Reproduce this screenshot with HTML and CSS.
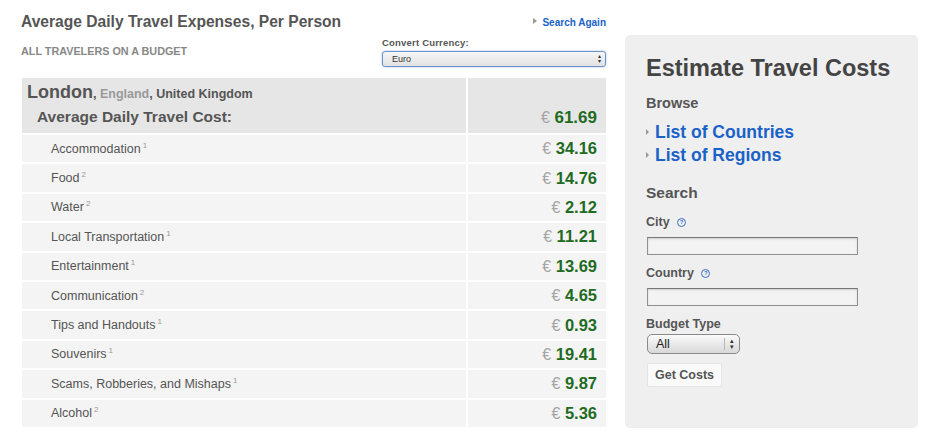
FILE: index.html
```html
<!DOCTYPE html>
<html lang="en">
<head>
    <meta charset="UTF-8">
    <title>Average Daily Travel Expenses - London</title>
    <link rel="stylesheet" href="styles.css">
</head>
<body>
    <div id="page">
        <div id="costs">
            <div class="head-row">
                <h1>Average Daily Travel Expenses, Per Person</h1>
                <a href="#" class="arrow-link small-link">Search Again</a>
            </div>
            <div class="sub-row">
                <p class="budget-label">ALL TRAVELERS ON A BUDGET</p>
                <div class="currency">
                    <label for="currency">Convert Currency:</label>
                    <div class="currency-select">
                        <span>Euro</span>
                        <span class="updown">&#9652;<br>&#9662;</span>
                    </div>
                </div>
            </div>
            <table class="cost-table">
                <tr class="total-row">
                    <td class="name-cell">
                        <div class="place"><b class="city">London</b>, <span class="region">England</span>, United Kingdom</div>
                        <div class="total-label">Average Daily Travel Cost:</div>
                    </td>
                    <td class="value-cell"><span class="euro">&euro;</span> <span class="amount big">61.69</span></td>
                </tr>
                <tr><td class="name-cell">Accommodation<sup>1</sup></td><td class="value-cell"><span class="euro">&euro;</span> <span class="amount">34.16</span></td></tr>
                <tr><td class="name-cell">Food<sup>2</sup></td><td class="value-cell"><span class="euro">&euro;</span> <span class="amount">14.76</span></td></tr>
                <tr><td class="name-cell">Water<sup>2</sup></td><td class="value-cell"><span class="euro">&euro;</span> <span class="amount">2.12</span></td></tr>
                <tr><td class="name-cell">Local Transportation<sup>1</sup></td><td class="value-cell"><span class="euro">&euro;</span> <span class="amount">11.21</span></td></tr>
                <tr><td class="name-cell">Entertainment<sup>1</sup></td><td class="value-cell"><span class="euro">&euro;</span> <span class="amount">13.69</span></td></tr>
                <tr><td class="name-cell">Communication<sup>2</sup></td><td class="value-cell"><span class="euro">&euro;</span> <span class="amount">4.65</span></td></tr>
                <tr><td class="name-cell">Tips and Handouts<sup>1</sup></td><td class="value-cell"><span class="euro">&euro;</span> <span class="amount">0.93</span></td></tr>
                <tr><td class="name-cell">Souvenirs<sup>1</sup></td><td class="value-cell"><span class="euro">&euro;</span> <span class="amount">19.41</span></td></tr>
                <tr><td class="name-cell">Scams, Robberies, and Mishaps<sup>1</sup></td><td class="value-cell"><span class="euro">&euro;</span> <span class="amount">9.87</span></td></tr>
                <tr><td class="name-cell">Alcohol<sup>2</sup></td><td class="value-cell"><span class="euro">&euro;</span> <span class="amount">5.36</span></td></tr>
            </table>
            <div class="foot-row">
                <a href="#" class="arrow-link small-link">Where do these numbers come from?</a>
            </div>
        </div>

        <div id="sidebar">
            <h2>Estimate Travel Costs</h2>
            <h3>Browse</h3>
            <ul class="browse-list">
                <li><a href="#" class="arrow-link">List of Countries</a></li>
                <li><a href="#" class="arrow-link">List of Regions</a></li>
            </ul>
            <h3 class="search-title">Search</h3>
            <form class="search-form">
                <label>City <span class="help">?</span></label>
                <input type="text" class="text-field">
                <label>Country <span class="help">?</span></label>
                <input type="text" class="text-field">
                <label>Budget Type</label>
                <div class="budget-select">
                    <span>All</span>
                    <span class="updown">&#9652;<br>&#9662;</span>
                </div>
                <button type="button" class="get-costs">Get Costs</button>
            </form>
        </div>
    </div>
</body>
</html>
```

FILE: styles.css
```css
body {
    margin: 0;
    padding: 0;
    background-color: #ffffff;
    font-family: "Liberation Sans", Arial, sans-serif;
    color: #555555;
}
#page {
    display: flex;
    align-items: flex-start;
    padding-left: 21px;
}
#costs {
    width: 585px;
    padding-top: 12px;
}
.head-row {
    display: flex;
    justify-content: space-between;
    align-items: center;
    height: 20px;
}
h1 {
    margin: 0;
    font-size: 15.6px;
    color: #555555;
    line-height: 20px;
}
a {
    text-decoration: none;
    color: #1a62c8;
    font-weight: bold;
}
.arrow-link::before {
    content: "";
    display: inline-block;
    border-left: 4px solid #999999;
    border-top: 3px solid transparent;
    border-bottom: 3px solid transparent;
    margin-right: 5px;
    vertical-align: middle;
    position: relative;
    top: -2px;
}
.small-link {
    font-size: 10px;
}
.sub-row {
    display: flex;
    justify-content: space-between;
    align-items: flex-start;
    height: 35px;
}
.budget-label {
    margin: 13px 0 0 0;
    font-size: 10.8px;
    font-weight: bold;
    color: #888888;
    line-height: 12px;
}
.currency {
    width: 224px;
    padding-top: 5px;
}
.currency label {
    display: block;
    font-size: 9.5px;
    font-weight: bold;
    color: #555555;
    line-height: 12px;
    letter-spacing: 0.2px;
}
.currency-select {
    margin-top: 2px;
    height: 14px;
    border: 1px solid #6b93c6;
    border-radius: 3px;
    box-shadow: 0 0 2px #8fb4e6;
    background: linear-gradient(#f6f6f6, #e2e2e2);
    display: flex;
    justify-content: space-between;
    align-items: center;
    padding: 0 4px 0 9px;
    font-size: 9px;
    color: #333333;
}
.updown {
    font-size: 6px;
    line-height: 5px;
    color: #333333;
    text-align: center;
}
.cost-table {
    width: 584px;
    margin-top: 11px;
    margin-left: 1px;
    border-collapse: collapse;
}
.cost-table td {
    background-color: #f4f4f4;
    border-top: 2px solid #ffffff;
    height: 27.4px;
    padding: 0;
}
.cost-table tr:first-child td {
    border-top: none;
}
.cost-table .name-cell {
    padding-left: 29px;
    font-size: 12.5px;
    color: #555555;
    border-right: 2px solid #ffffff;
}
sup {
    font-size: 8px;
    color: #999999;
    margin-left: 2px;
    vertical-align: 5px;
    line-height: 0;
}
.value-cell {
    width: 129px;
    padding-right: 9px !important;
    text-align: right;
    white-space: nowrap;
}
.euro {
    font-size: 16px;
    color: #a5a5a5;
}
.amount {
    font-size: 16.5px;
    font-weight: bold;
    color: #1f6b1f;
}
.total-row td {
    background-color: #e6e6e6;
    height: 50px;
    vertical-align: top;
}
.total-row .name-cell {
    padding-left: 5px;
}
.total-row .value-cell {
    vertical-align: bottom;
    padding-bottom: 5px;
}
.place {
    margin-top: 5px;
    font-size: 12.5px;
    font-weight: bold;
    color: #555555;
    line-height: 18px;
}
.city {
    font-size: 18px;
    color: #555555;
}
.region {
    color: #999999;
}
.total-label {
    margin-top: 5px;
    padding-left: 10px;
    font-size: 15.5px;
    font-weight: bold;
    color: #555555;
    line-height: 18px;
}
.amount.big {
    font-size: 17px;
}
.foot-row {
    text-align: right;
    margin-top: 3px;
}
#sidebar {
    width: 272px;
    min-height: 376px;
    margin-top: 35px;
    margin-left: 19px;
    padding: 17px 0 0 21px;
    background-color: #efefef;
    border-radius: 5px;
}
h2 {
    margin: 0;
    font-size: 23.5px;
    color: #444444;
    line-height: 32px;
}
h3 {
    margin: 10px 0 0 0;
    font-size: 14.5px;
    color: #555555;
    line-height: 18px;
}
.browse-list {
    list-style: none;
    margin: 9px 0 0 0;
    padding: 0;
}
.browse-list li {
    line-height: 23px;
}
.browse-list a {
    font-size: 17.5px;
    color: #1a62c8;
}
.browse-list .arrow-link::before {
    border-left-width: 3px;
    border-top-width: 3px;
    border-bottom-width: 3px;
    margin-right: 6px;
    top: -1px;
}
.search-title {
    margin-top: 17px;
    font-size: 15.5px;
}
.search-form {
    display: flex;
    flex-direction: column;
    align-items: flex-start;
    margin-top: 13px;
}
.search-form label {
    font-size: 12.5px;
    font-weight: bold;
    color: #555555;
    line-height: 15px;
}
.help {
    display: inline-block;
    width: 7px;
    height: 7px;
    border: 1px solid #3a6fc4;
    border-radius: 50%;
    font-size: 6px;
    line-height: 7px;
    text-align: center;
    color: #3a6fc4;
    margin-left: 4px;
    vertical-align: middle;
}
.text-field {
    width: 207px;
    height: 14px;
    margin: 7px 0 11px 1px;
    padding: 1px;
    border: 1px solid #8f8f8f;
    border-top-color: #777777;
    background-color: #f3f3f3;
    box-shadow: inset 0 1px 2px rgba(0, 0, 0, 0.15);
}
.budget-select {
    width: 78px;
    height: 18px;
    margin: 2px 0 0 1px;
    border: 1px solid #8a8a8a;
    border-radius: 5px;
    background: linear-gradient(#fafafa, #d8d8d8);
    display: flex;
    justify-content: space-between;
    align-items: center;
    padding: 0 5px 0 8px;
    font-size: 12.5px;
    color: #222222;
}
.budget-select .updown {
    border-left: 1px solid #b5b5b5;
    padding-left: 5px;
    font-size: 7px;
    line-height: 6px;
}
.get-costs {
    margin: 9px 0 0 1px;
    width: 75px;
    height: 24px;
    border: 1px solid #e4e4e4;
    border-radius: 2px;
    background-color: #fafafa;
    font-family: "Liberation Sans", Arial, sans-serif;
    font-size: 12.5px;
    font-weight: bold;
    color: #555555;
    padding: 0;
}
```
